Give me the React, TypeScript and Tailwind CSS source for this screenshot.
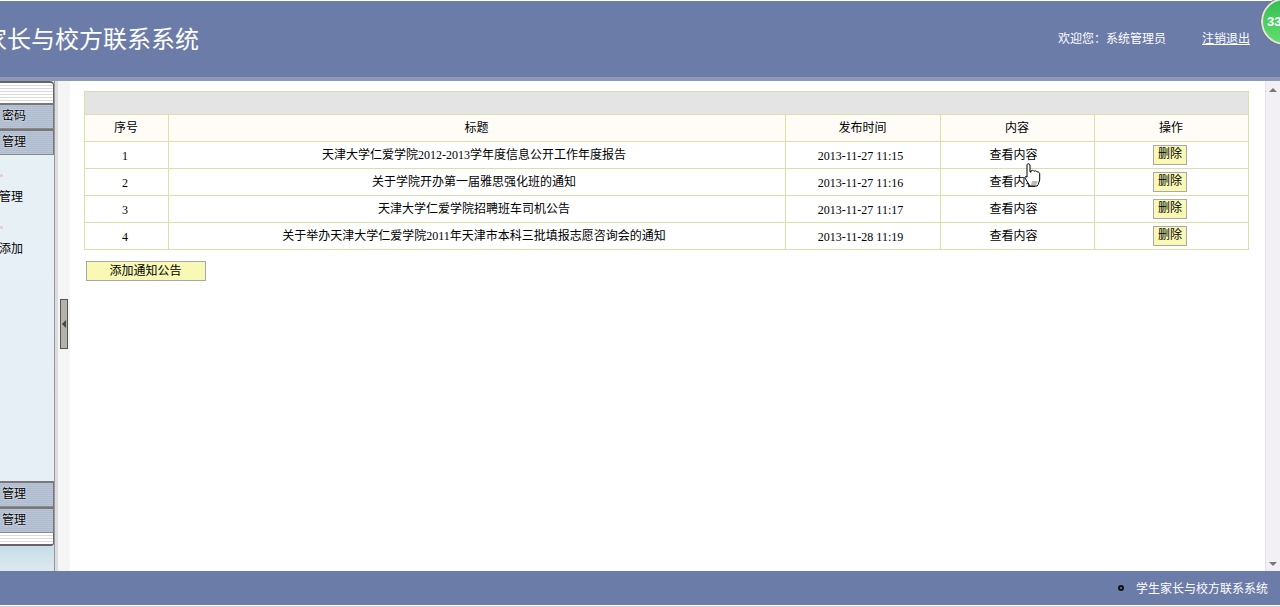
const rows = [
  { id: '1', title: '天津大学仁爱学院2012-2013学年度信息公开工作年度报告', time: '2013-11-27 11:15' },
  { id: '2', title: '关于学院开办第一届雅思强化班的通知', time: '2013-11-27 11:16' },
  { id: '3', title: '天津大学仁爱学院招聘班车司机公告', time: '2013-11-27 11:17' },
  { id: '4', title: '关于举办天津大学仁爱学院2011年天津市本科三批填报志愿咨询会的通知', time: '2013-11-28 11:19' },
]

const cellFont = "font-['Liberation_Serif','Noto_Sans_CJK_SC',serif]"

function SideItem({ label }: { label: string }) {
  return (
    <div className="h-[26px] border-t-2 border-b border-r border-t-[#777] border-b-[#8a8a8a] border-r-[#777] bg-[repeating-linear-gradient(180deg,#b9c4d6_0px,#b9c4d6_1px,#aebbcf_1px,#aebbcf_2px)] pl-[2px] text-[12px] leading-[19px] text-black [text-shadow:0_0_2px_#fff]">
      {label}
    </div>
  )
}

function Cap({ bottom }: { bottom?: boolean }) {
  return (
    <div
      className={`bg-[repeating-linear-gradient(180deg,#ffffff_0px,#ffffff_2px,#dadada_2px,#dadada_3px)] border-r border-[#666] ${
        bottom ? 'h-[13px] border-b-2 rounded-br-[3px]' : 'h-[22px] border-t-2 rounded-tr-[4px]'
      }`}
    />
  )
}

function SideLink({ label }: { label: string }) {
  return (
    <div className="relative h-[52px] pt-[17px] -ml-px">
      <span className="absolute left-px top-[4px] w-[3px] h-[3px] rounded-full bg-[#e8c8d0]" />
      {label}
    </div>
  )
}

export default function App() {
  return (
    <div className="relative w-[1280px] h-[607px] overflow-hidden flex flex-col bg-white font-['Noto_Sans_CJK_SC',sans-serif] text-[12px]">
      {/* Header */}
      <header className="mt-px h-[76px] shrink-0 bg-[#6b7ca9] flex items-center relative overflow-hidden">
        <h1 className="-ml-[65px] -mt-[3px] text-[24px] text-white whitespace-nowrap leading-none">学生家长与校方联系系统</h1>
        <div className="ml-auto -mt-[2px] flex text-[12px] text-white mr-[30px]">
          <span className="mr-[36px]">欢迎您：系统管理员</span>
          <a className="underline">注销退出</a>
        </div>
      </header>
      <div className="h-[4px] shrink-0 bg-[#8d99b6]" />

      {/* Notification badge */}
      <div className="absolute left-[1261px] -top-[2px] w-[47px] h-[47px] rounded-full border-2 border-[#e4e4e4] outline outline-[#777] bg-[linear-gradient(180deg,#35bd52,#62de70)] text-white font-bold text-[13px] pl-[4px] leading-[43px] font-['Liberation_Sans',sans-serif]">
        33
      </div>

      {/* Middle */}
      <div className="flex-1 min-h-0 flex">
        <aside className="w-[55px] shrink-0 flex flex-col bg-[linear-gradient(180deg,#e6f1f5,#e6eef7)] border-r border-[#999]">
          <Cap />
          <SideItem label="密码" />
          <SideItem label="管理" />
          <div className="flex-1 pt-[15px] text-[12px] text-black whitespace-nowrap">
            <SideLink label="管理" />
            <SideLink label="添加" />
          </div>
          <SideItem label="管理" />
          <SideItem label="管理" />
          <Cap bottom />
          <div className="h-[25px] bg-[linear-gradient(180deg,#c8dde8,#dde9ef)]" />
        </aside>
        <div className="w-[3px] bg-[#dcdce0]" />
        <div className="w-[12px] bg-[#f5f5f5] relative">
          <div className="absolute left-[2px] top-[218px] w-[8px] h-[50px] bg-[#b5b2aa] border border-[#555] flex items-center justify-center">
            <span className="w-0 h-0 border-y-[4px] border-y-transparent border-r-[4px] border-r-[#444]" />
          </div>
        </div>

        <main className="flex-1 min-w-0 pl-[14px] pr-[16px] pt-[10px] bg-white">
          <table className={`w-[1164px] table-fixed border-collapse text-[12px] text-black ${cellFont}`}>
            <colgroup>
              <col className="w-[84px]" />
              <col className="w-[617px]" />
              <col className="w-[155px]" />
              <col className="w-[154px]" />
              <col className="w-[154px]" />
            </colgroup>
            <tbody>
              <tr className="h-[23px] bg-[#e4e4e4]">
                <td colSpan={5} className="border border-[#dbe0ab]" />
              </tr>
              <tr className="h-[27px] bg-[#fffcf7] text-center">
                {['序号', '标题', '发布时间', '内容', '操作'].map((h) => (
                  <td key={h} className="border border-[#dbe0ab] p-0 pr-px">{h}</td>
                ))}
              </tr>
              {rows.map((r) => (
                <tr key={r.id} className="h-[27px] text-center">
                  <td className="border border-[#dbe0ab] p-0 pr-[3px] pt-px">{r.id}</td>
                  <td className="border border-[#dbe0ab] p-0 pr-[6px]">{r.title}</td>
                  <td className="border border-[#dbe0ab] p-0 pr-[5px] pt-[2px]">{r.time}</td>
                  <td className="border border-[#dbe0ab] p-0 pr-[8px]">查看内容</td>
                  <td className="border border-[#dbe0ab] p-0 pr-[3px]">
                    <button className="w-[34px] h-[20px] bg-[#f9f9b5] border border-[#a9a9a9] text-[12px] leading-[14px] pb-[2px] align-middle">删除</button>
                  </td>
                </tr>
              ))}
            </tbody>
          </table>
          <button className="block ml-[2px] mt-[11px] w-[120px] h-[20px] bg-[#f9f9b5] border border-[#a9a9a9] text-[12px] leading-[14px] pb-[3px] pr-px text-black">
            添加通知公告
          </button>
        </main>

        {/* Scrollbar */}
        <div className="w-[15px] shrink-0 flex flex-col items-center justify-between bg-[#f2f0f4] border-l border-[#e4e4e4] pt-[7px] pb-[5px]">
          <span className="w-0 h-0 border-x-[4px] border-x-transparent border-b-[4px] border-b-[#777]" />
          <span className="w-0 h-0 border-x-[4px] border-x-transparent border-t-[4px] border-t-[#777]" />
        </div>
      </div>

      {/* Footer */}
      <footer className="h-[34px] shrink-0 bg-[#6b7ca9] flex items-center justify-end pr-[12px] text-white text-[12px] mb-px">
        <span className="w-[6px] h-[6px] rounded-full border-2 border-[#111] mr-[12px]" />
        <span>学生家长与校方联系系统</span>
      </footer>
      <div className="h-px shrink-0 bg-[#cfcfd4]" />

      {/* Hand cursor */}
      <svg className="absolute left-[1024px] top-[163px]" width="17" height="24" viewBox="0 0 17 24">
        <path d="M3 1.500c1-1 2.500-1 3 .5v7l1 .2V8c1-1 2.400-.8 3 .3 1-.8 2.300-.5 3 .6 1.200-.3 2.500.5 2.700 1.600V17l-1.500 4.500-1 1.500H6l-2-3-3-5c-.5-1 .5-2 2-1V2z" fill="#fff" stroke="#000" strokeWidth="1" />
        <path d="M8 18h6l-2 4H7z" fill="#bbb" />
      </svg>
    </div>
  )
}
